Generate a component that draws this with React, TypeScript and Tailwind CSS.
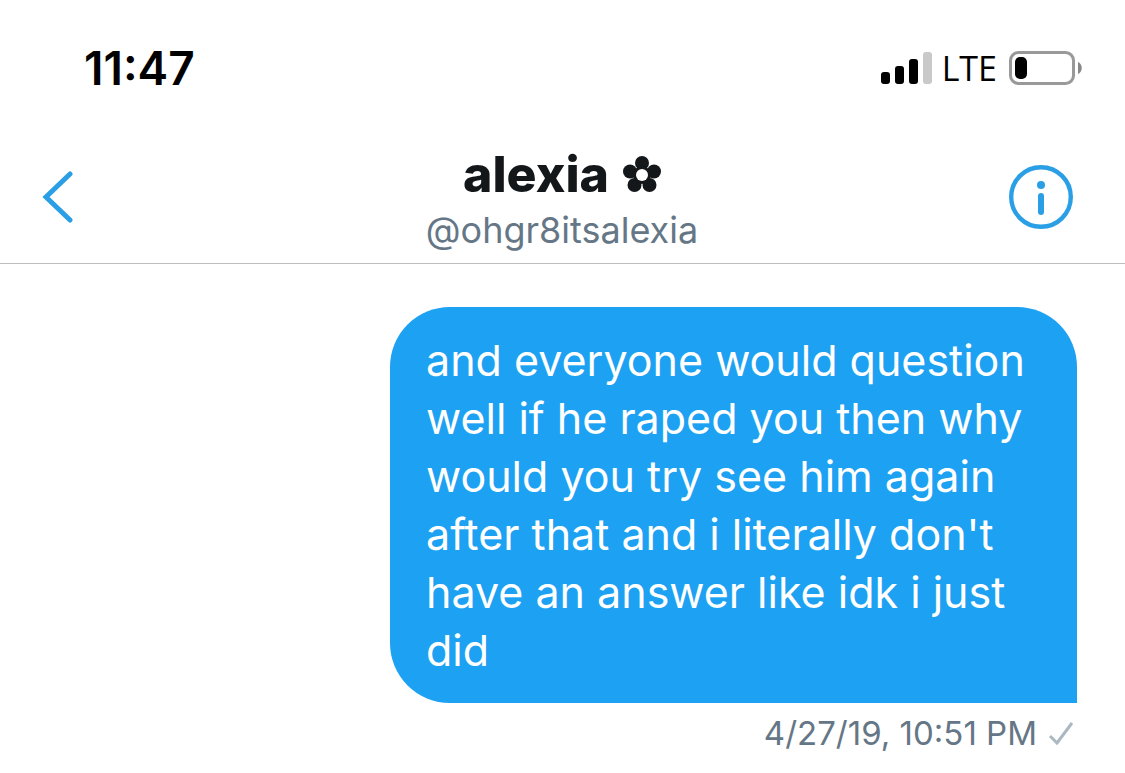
function SignalIcon() {
  return (
    <svg className="h-8 w-[51px]" viewBox="0 0 51 32" aria-hidden="true">
      <rect x="0" y="20" width="9" height="12" rx="3" />
      <rect x="14" y="14" width="9" height="18" rx="3" />
      <rect x="28" y="7" width="9" height="25" rx="3" />
      <rect x="42" y="0" width="9" height="32" rx="3" fill="#c9c9c9" />
    </svg>
  );
}

function BatteryIcon() {
  return (
    <svg className="h-[34px] w-[73px]" viewBox="0 0 73 34" aria-hidden="true">
      <rect x="1.5" y="1.5" width="63" height="31" rx="8" fill="none" stroke="#999" strokeWidth="3" />
      <rect x="6" y="6" width="12" height="22" rx="5" />
      <path d="M69 11c5 2 5 10 0 12z" fill="#888" />
    </svg>
  );
}

function FlowerIcon() {
  return (
    <svg className="h-[38px] w-[38px]" viewBox="0 0 38 38" fill="#14171a" aria-hidden="true">
      <circle cx="19" cy="8" r="7" />
      <circle cx="31" cy="16.5" r="7" />
      <circle cx="26.5" cy="30" r="7" />
      <circle cx="11.5" cy="30" r="7" />
      <circle cx="7" cy="16.5" r="7" />
      <circle cx="19" cy="20" r="9" />
      <circle cx="19" cy="20" r="6" fill="#fff" />
    </svg>
  );
}

function StatusBar() {
  return (
    <div className="flex h-[136px] items-center justify-between pl-[84px] pr-[43px] text-black">
      <span className="text-[46px] font-semibold leading-none">11:47</span>
      <div className="flex items-center">
        <SignalIcon />
        <span className="ml-2.5 mr-3 font-['Open_Sans',sans-serif] text-[34px] font-medium leading-none">LTE</span>
        <BatteryIcon />
      </div>
    </div>
  );
}

function ChatHeader() {
  return (
    <header className="flex h-32 items-center justify-between border-b border-[#bdbdbd] pb-1.5 pl-[42px] pr-[52px]">
      <button type="button" aria-label="Back" className="flex w-[73px] text-[#2b9fe6]">
        <svg className="h-[52px] w-8" viewBox="0 0 32 52" fill="none" stroke="currentColor" strokeWidth="5" strokeLinecap="round">
          <path d="M28 3L4 26L28 49" />
        </svg>
      </button>
      <div className="flex flex-col items-center pt-2">
        <h1 className="flex items-center gap-3.5 text-[50px] font-extrabold leading-[58px] text-[#14171a]">
          alexia
          <FlowerIcon />
        </h1>
        <p className="text-[36px] leading-[54px] text-[#657786]">@ohgr8itsalexia</p>
      </div>
      <button type="button" aria-label="Conversation info" className="text-[#2b9fe6]">
        <svg className="h-16 w-16" viewBox="0 0 64 64" fill="none" stroke="currentColor">
          <circle cx="32" cy="32" r="29.8" strokeWidth="4.4" />
          <circle cx="32" cy="20" r="4" fill="currentColor" stroke="none" />
          <path d="M32 31V47" strokeWidth="6" strokeLinecap="round" />
        </svg>
      </button>
    </header>
  );
}

function SentMessage({ text, time }: { text: string; time: string }) {
  return (
    <div className="flex flex-col items-end">
      <p className="max-w-[687px] rounded-[60px] rounded-br-none bg-[#1da1f2] px-9 py-6 text-[43px] leading-[58px] text-white">
        {text}
      </p>
      <div className="flex items-center gap-3 pr-1 pt-2 text-[#657786]">
        <span className="text-[33px] leading-[44px]">{time}</span>
        <svg className="h-6 w-6" viewBox="0 0 24 24" fill="none" stroke="#aab8c2" strokeWidth="3" aria-hidden="true">
          <path d="M1 15L8 22L23 2" />
        </svg>
      </div>
    </div>
  );
}

export default function App() {
  return (
    <div className="min-h-screen bg-white font-[Inter,sans-serif]">
      <StatusBar />
      <ChatHeader />
      <main className="pl-12 pr-12 pt-[43px]">
        <SentMessage
          text="and everyone would question well if he raped you then why would you try see him again after that and i literally don't have an answer like idk i just did"
          time="4/27/19, 10:51 PM"
        />
      </main>
    </div>
  );
}
